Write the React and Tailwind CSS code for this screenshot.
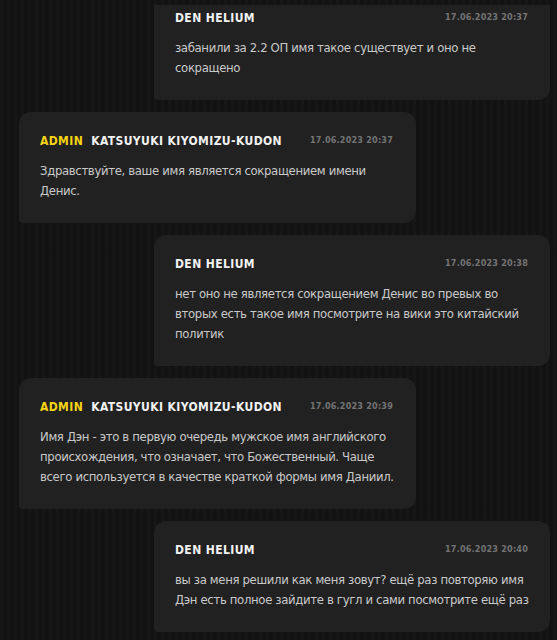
const messages = [
  {
    id: 1,
    mine: true,
    author: "DEN HELIUM",
    time: "17.06.2023 20:37",
    lines: ["забанили за 2.2 ОП имя такое существует и оно не", "сокращено"],
  },
  {
    id: 2,
    mine: false,
    admin: true,
    author: "KATSUYUKI KIYOMIZU-KUDON",
    time: "17.06.2023 20:37",
    lines: ["Здравствуйте, ваше имя является сокращением имени", "Денис."],
  },
  {
    id: 3,
    mine: true,
    author: "DEN HELIUM",
    time: "17.06.2023 20:38",
    lines: [
      "нет оно не является сокращением Денис во превых во",
      "вторых есть такое имя посмотрите на вики это китайский",
      "политик",
    ],
  },
  {
    id: 4,
    mine: false,
    admin: true,
    author: "KATSUYUKI KIYOMIZU-KUDON",
    time: "17.06.2023 20:39",
    lines: [
      "Имя Дэн - это в первую очередь мужское имя английского",
      "происхождения, что означает, что Божественный. Чаще",
      "всего используется в качестве краткой формы имя Даниил.",
    ],
  },
  {
    id: 5,
    mine: true,
    author: "DEN HELIUM",
    time: "17.06.2023 20:40",
    lines: [
      "вы за меня решили как меня зовут? ещё раз повторяю имя",
      "Дэн есть полное зайдите в гугл и сами посмотрите ещё раз",
    ],
  },
];

const font = "font-['DejaVu_Sans_Condensed','DejaVu_Sans',sans-serif]";

const Message = ({ msg }) => (
  <div
    className={
      msg.mine
        ? "self-end mr-[7px] w-[396px] bg-[#212121] rounded-xl rounded-bl-sm pl-[21px] pr-[22px] pt-[19px] pb-[22px]"
        : "ml-[19px] w-[397px] bg-[#212121] rounded-xl rounded-bl-sm pl-[21px] pr-[23px] pt-[19px] pb-[22px]"
    }
  >
    <div className="flex items-center justify-between h-5 whitespace-nowrap">
      <div className="flex items-center gap-2 text-[12px] font-bold tracking-[0.4px] uppercase">
        {msg.admin && <span className="text-[#f5d413]">Admin</span>}
        <span className="text-[#f2f2f2]">{msg.author}</span>
      </div>
      <span className="text-[9px] font-bold tracking-[0.2px] text-[#747474]">{msg.time}</span>
    </div>
    <p className="mt-2.5 text-[13px] tracking-[-0.35px] leading-5 text-[#c9c9c9] whitespace-nowrap">
      {msg.lines.map((line, i) => (
        <span key={i} className="block">{line}</span>
      ))}
    </p>
  </div>
);

export default function App() {
  return (
    <div
      className={`${font} w-[557px] h-[640px] pt-[5px] bg-[#131313] bg-[repeating-linear-gradient(90deg,rgba(255,255,255,0.012)_0px,rgba(255,255,255,0.012)_3px,rgba(0,0,0,0.03)_3px,rgba(0,0,0,0.03)_7px)] overflow-hidden`}
    >
      <div className="h-[635px] overflow-hidden">
        <div className="flex flex-col gap-3 mt-[-16px]">
          {messages.map((m) => (
            <Message key={m.id} msg={m} />
          ))}
        </div>
      </div>
    </div>
  );
}
